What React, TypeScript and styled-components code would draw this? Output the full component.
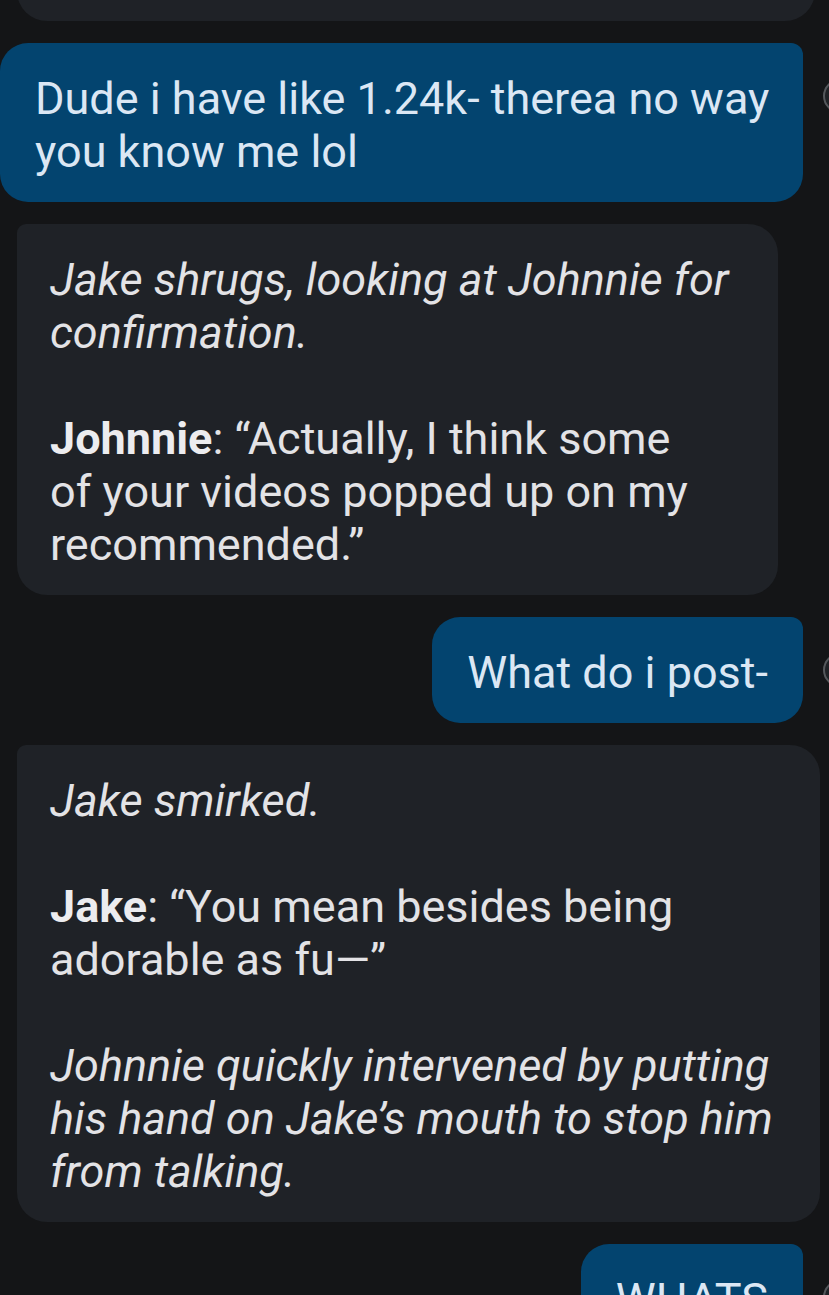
import React from "react";
import styled, { createGlobalStyle } from "styled-components";

const GlobalStyle = createGlobalStyle`
  html, body {
    margin: 0;
    padding: 0;
    background: #141517;
    overflow: hidden;
  }
  body {
    font-family: Roboto, "Noto Sans", "Liberation Sans", sans-serif;
    -webkit-font-smoothing: antialiased;
  }
`;

const Thread = styled.div`
  display: flex;
  flex-direction: column;
  gap: 22px;
  width: 829px;
  margin-top: -40px;
  padding-bottom: 40px;
`;

const BotRow = styled.div`
  display: flex;
  justify-content: flex-start;
  padding-left: 17px;
`;

const UserRow = styled.div`
  display: flex;
  justify-content: flex-end;
  align-items: flex-start;
  gap: 20px;
  margin-right: -28px;
`;

const BotBubble = styled.div<{ $width: number; $height?: number }>`
  box-sizing: border-box;
  width: ${(p) => p.$width}px;
  ${(p) => (p.$height ? `height: ${p.$height}px;` : "")}
  background: #1f2227;
  border-radius: 9px 30px 30px 30px;
  padding: 29px 33px 24px 33px;
  color: #e3e3e6;
  font-size: 45px;
  line-height: 53px;
`;

const UserBubble = styled.div`
  box-sizing: border-box;
  max-width: 803px;
  background: #03446f;
  border-radius: 28px 12px 28px 28px;
  padding: 29px 35px 24px 35px;
  color: #dbe7f4;
  font-size: 45px;
  line-height: 53px;
`;

const Avatar = styled.div`
  flex: none;
  width: 30px;
  height: 30px;
  margin-top: 36px;
  border-radius: 50%;
  border: 2px solid #55585c;
  background: #202226;
`;

const Para = styled.p<{ $italic?: boolean }>`
  margin: 0;
  font-style: ${(p) => (p.$italic ? "italic" : "normal")};
  white-space: nowrap;
  & + & {
    margin-top: 53px;
  }
`;

const Name = styled.b`
  font-weight: 700;
  color: #ececef;
`;

export default function App() {
  return (
    <>
      <GlobalStyle />
      <Thread>
        <BotRow>
          <BotBubble $width={798} $height={61} />
        </BotRow>

        <UserRow>
          <UserBubble>
            <Para>
              Dude i have like 1.24k- therea no way
              <br />
              you know me lol
            </Para>
          </UserBubble>
          <Avatar />
        </UserRow>

        <BotRow>
          <BotBubble $width={761}>
            <Para $italic>
              Jake shrugs, looking at Johnnie for
              <br />
              confirmation.
            </Para>
            <Para>
              <Name>Johnnie</Name>: “Actually, I think some
              <br />
              of your videos popped up on my
              <br />
              recommended.”
            </Para>
          </BotBubble>
        </BotRow>

        <UserRow>
          <UserBubble>
            <Para>What do i post-</Para>
          </UserBubble>
          <Avatar />
        </UserRow>

        <BotRow>
          <BotBubble $width={803}>
            <Para $italic>Jake smirked.</Para>
            <Para>
              <Name>Jake</Name>: “You mean besides being
              <br />
              adorable as fu—”
            </Para>
            <Para $italic>
              Johnnie quickly intervened by putting
              <br />
              his hand on Jake’s mouth to stop him
              <br />
              from talking.
            </Para>
          </BotBubble>
        </BotRow>

        <UserRow>
          <UserBubble>
            <Para>WHATS</Para>
          </UserBubble>
          <Avatar />
        </UserRow>
      </Thread>
    </>
  );
}
